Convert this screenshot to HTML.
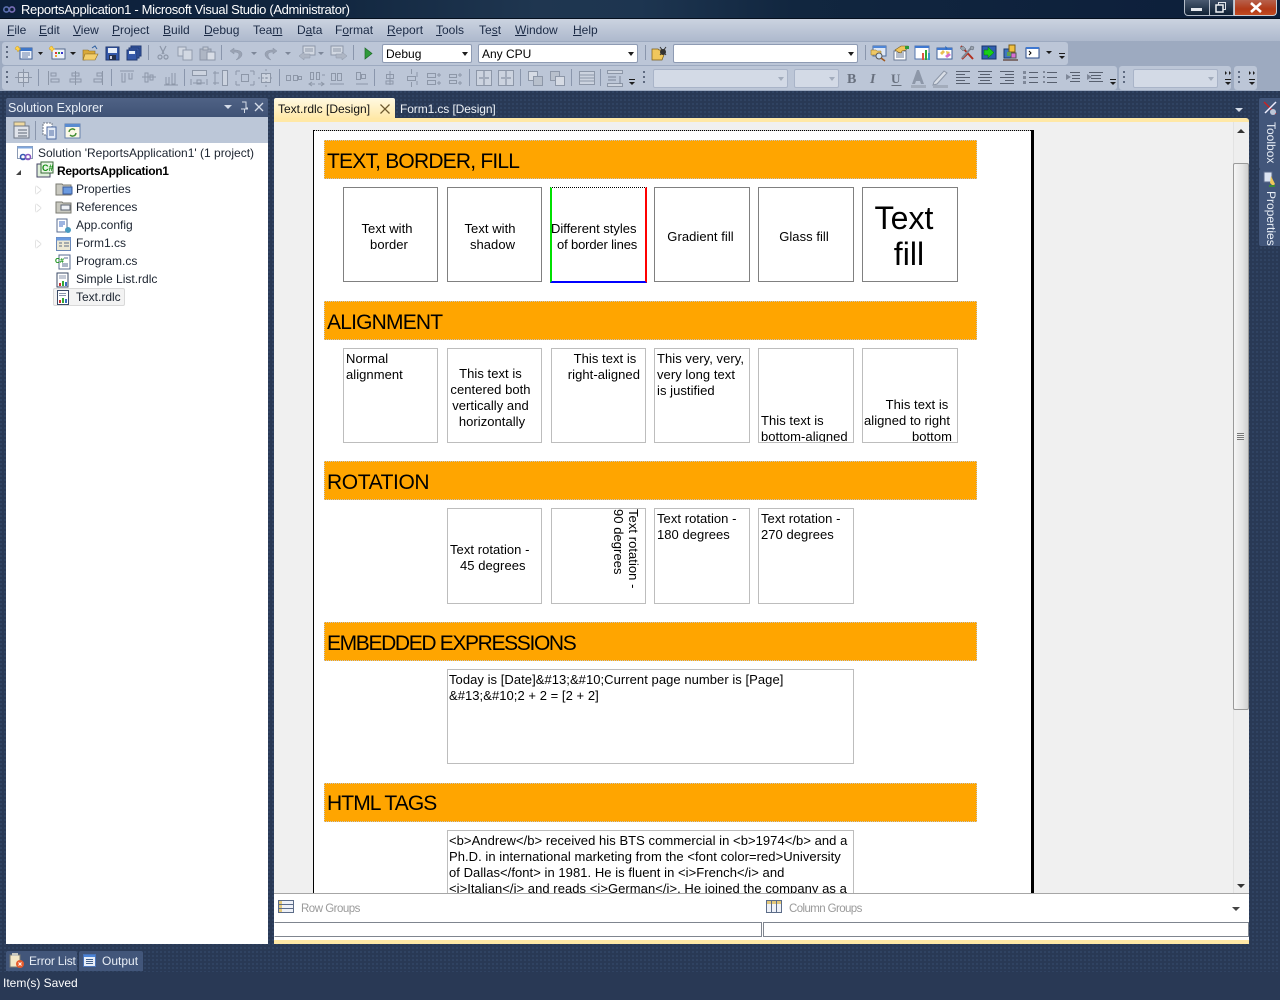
<!DOCTYPE html>
<html><head><meta charset="utf-8"><title>Visual Studio</title>
<style>
*{box-sizing:border-box}
html,body{margin:0;padding:0;width:1280px;height:1000px;overflow:hidden;background:#293955}
body{position:relative;font-family:"Liberation Sans",sans-serif;font-size:12px;color:#000}
div,span.a,svg.a{position:absolute}
.t{white-space:nowrap;line-height:16px}
.menu span{position:absolute;top:3px;line-height:16px;color:#1b2a45;white-space:nowrap;font-size:12px}
.menu u{text-decoration:underline}
.combo{background:#fff;border:1px solid #8e9bb3;border-radius:2px;height:19px;line-height:18px;padding-left:3px;font-size:12px}
.combo i,.ar{position:absolute;width:0;height:0;border-left:3px solid transparent;border-right:3px solid transparent;border-top:4px solid #1d1d1d}
.combo i{right:3px;top:7px}
.dis{background:#d3dae6;border:1px solid #a9b4c8}
.dis i{border-top-color:#a3adbd}
.tree{color:#1c2430;line-height:16px;white-space:nowrap;font-size:12px}
.tri{position:absolute;width:0;height:0;border-top:4px solid transparent;border-bottom:4px solid transparent;border-left:5px solid #fff;filter:drop-shadow(0 0 .6px #777)}
.r{font-size:13px;line-height:16px;color:#000;white-space:nowrap;letter-spacing:.05px}
.b{background:#fff;border:1px solid #bdbdbd;overflow:hidden}
.d{border:1px solid #808080;background:#fff}
.h{left:50px;width:653px;height:39px;background:#ffa500;outline:1px dotted #c4c4c4;outline-offset:-1px;font-size:21px;line-height:26px;white-space:nowrap;padding:9px 0 0 3px;letter-spacing:-.8px}
.bx{overflow:hidden}
.bx div{position:absolute}
</style></head><body>

<!-- backgrounds -->
<div style="left:0;top:0;width:1280px;height:18px;background:linear-gradient(90deg,#0c1f3b 0,#11263f 25%,#1f3650 42%,#1d3550 50%,#11263f 62%,#0c1e3a 100%)"></div>
<div style="left:0;top:18px;width:1280px;height:1px;background:#05101f"></div>
<div style="left:0;top:19px;width:1280px;height:22px;background:linear-gradient(#cbd3e0,#aeb9cd)"></div>
<div style="left:0;top:41px;width:1280px;height:50px;background:#9daac0"></div>
<div style="left:2px;top:42px;width:1066px;height:23px;background:#bcc6d7;border-radius:3px"></div>
<div style="left:2px;top:66px;width:1115px;height:24px;background:#bcc6d7;border-radius:3px"></div>
<div style="left:1119px;top:66px;width:112px;height:24px;background:#bcc6d7;border-radius:3px"></div>
<div style="left:1234px;top:66px;width:23px;height:24px;background:#bcc6d7;border-radius:3px"></div>
<div style="left:0;top:91px;width:1280px;height:881px;background-color:#293955;background-image:radial-gradient(circle at 1px 1px,#334667 0.8px,transparent 1px);background-size:4px 4px"></div>

<!-- title -->
<svg class="a" style="left:1px;top:5px" width="16" height="9"><g fill="none" stroke="#7b6fb8" stroke-width="1.6"><circle cx="11" cy="4.5" r="2.6"/><circle cx="5.4" cy="4.5" r="2.6" stroke="#5a6fb0"/></g></svg>
<div class="t" style="left:21px;top:2px;color:#fff;font-size:13px;letter-spacing:-.33px">ReportsApplication1 - Microsoft Visual Studio (Administrator)</div>
<div style="left:1184px;top:0;width:26px;height:16px;background:linear-gradient(#4a5a70,#0f2034);border:1px solid #b4bcc8;border-top:0;border-radius:0 0 0 4px"></div>
<div style="left:1209px;top:0;width:25px;height:16px;background:linear-gradient(#3a4a62,#0f2034);border:1px solid #b4bcc8;border-top:0"></div>
<div style="left:1234px;top:0;width:43px;height:16px;background:linear-gradient(#b7614c 0,#b23a18 60%,#c24a20);border:1px solid #c7ccd4;border-top:0;border-radius:0 0 4px 0"></div>
<div style="left:1191px;top:8px;width:11px;height:3px;background:#e6e9ee"></div>
<svg class="a" style="left:1215px;top:2px" width="12" height="11"><rect x="3.5" y=".5" width="7" height="7" fill="none" stroke="#dfe3ea"/><rect x="1" y="3" width="7" height="7" fill="#1c2e46" stroke="#eef0f4" stroke-width="1.5"/></svg>
<svg class="a" style="left:1249px;top:2px" width="14" height="11"><path d="M2 1l10 9M12 1L2 10" stroke="#fff" stroke-width="2.6"/></svg>

<!-- menu -->
<div class="menu" style="left:0;top:19px;width:640px;height:22px">
<span style="left:7px"><u>F</u>ile</span><span style="left:39px"><u>E</u>dit</span><span style="left:73px"><u>V</u>iew</span><span style="left:112px"><u>P</u>roject</span><span style="left:163px"><u>B</u>uild</span><span style="left:204px"><u>D</u>ebug</span><span style="left:253px">Tea<u>m</u></span><span style="left:297px">D<u>a</u>ta</span><span style="left:335px">F<u>o</u>rmat</span><span style="left:387px"><u>R</u>eport</span><span style="left:436px"><u>T</u>ools</span><span style="left:479px">Te<u>s</u>t</span><span style="left:515px"><u>W</u>indow</span><span style="left:573px"><u>H</u>elp</span>
</div>

<!-- toolbar graphics -->
<svg class="a" style="left:0;top:40px" width="1280" height="52" viewBox="0 40 1280 52">
<!-- grips -->
<g fill="#5e6a80"><rect x="6" y="46" width="2" height="2"/><rect x="6" y="51" width="2" height="2"/><rect x="6" y="56" width="2" height="2"/><rect x="6" y="71" width="2" height="2"/><rect x="6" y="76" width="2" height="2"/><rect x="6" y="81" width="2" height="2"/><rect x="643" y="71" width="2" height="2"/><rect x="643" y="76" width="2" height="2"/><rect x="643" y="81" width="2" height="2"/><rect x="1123" y="71" width="2" height="2"/><rect x="1123" y="76" width="2" height="2"/><rect x="1123" y="81" width="2" height="2"/><rect x="1238" y="71" width="2" height="2"/><rect x="1238" y="76" width="2" height="2"/><rect x="1238" y="81" width="2" height="2"/></g>
<!-- separators -->
<g stroke="#8a96ac"><path d="M148.500 45v15M221.500 45v15M353.500 45v15M645.500 45v15M865.500 45v15M38.500 69v17M111.500 69v17M184.500 69v17M279.500 69v17M374.500 69v17M469.500 69v17M520.500 69v17M571.500 69v17M600.500 69v17"/></g>
<!-- TB1 color icons -->
<rect x="20" y="48" width="12" height="11" fill="#eef3fb" stroke="#3e5f95"/><rect x="20" y="48" width="12" height="3" fill="#3e76c8"/><path d="M16 47l2-1 1 2 2 1-2 1-1 2-1-2-2-1z" fill="#ffd24a" stroke="#c89a20" stroke-width=".5"/><path d="M22 53h8M22 55h8M22 57h6" stroke="#6a82a8"/>
<rect x="52" y="49" width="13" height="10" fill="#eef3fb" stroke="#556a8c"/><rect x="55" y="52" width="2" height="2" fill="#d33"/><rect x="58" y="52" width="2" height="2" fill="#3a3"/><rect x="61" y="52" width="2" height="2" fill="#33c"/><rect x="55" y="55" width="2" height="2" fill="#ea3"/><path d="M50 47l2-1 1 2 2 1-2 1-1 2-1-2-2-1z" fill="#ffd24a" stroke="#c89a20" stroke-width=".5"/>
<path d="M83 50h5l1 1h6v3H87l-2 6h-2z" fill="#d9a93a" stroke="#8e6c22" stroke-width=".6"/><path d="M85 54h13l-3 6H83z" fill="#f3cf6d" stroke="#8e6c22" stroke-width=".6"/><path d="M92 48l3-2 2 3" fill="none" stroke="#2e5fa0"/>
<rect x="106" y="47" width="13" height="13" fill="#3457a8" stroke="#203870"/><rect x="108" y="48" width="9" height="5" fill="#e8eef8"/><rect x="109" y="55" width="7" height="5" fill="#26304a"/><rect x="110" y="56" width="2" height="3" fill="#ccd"/>
<rect x="131" y="46" width="10" height="10" fill="#3457a8" stroke="#203870"/><rect x="129" y="48" width="10" height="10" fill="#3b5fb4" stroke="#203870"/><rect x="127" y="50" width="10" height="10" fill="#3457a8" stroke="#203870"/><rect x="129" y="51" width="6" height="3" fill="#e8eef8"/>
<!-- disabled tb1 -->
<g fill="none" stroke="#8d97a8" stroke-width="1.2"><path d="M160 46l4 8M166 46l-4 8"/><circle cx="160" cy="57" r="2"/><circle cx="166" cy="57" r="2"/></g>
<rect x="178" y="47" width="8" height="9" fill="#d2d8e2" stroke="#929cad"/><rect x="183" y="50" width="9" height="10" fill="#d2d8e2" stroke="#929cad"/>
<rect x="200" y="49" width="11" height="11" fill="#aeb6c4" stroke="#8d97a8"/><rect x="203" y="47" width="5" height="3" fill="#c3c9d4" stroke="#8d97a8"/><rect x="207" y="52" width="8" height="8" fill="#d8dde6" stroke="#8d97a8"/>
<path d="M234 48l-4 3 4 3v-2c3 0 5 1 5 3s-2 4-3 5c3-1 6-3 6-6s-4-4-8-4z" fill="#9aa3b3" stroke="#8a94a6" stroke-width=".5"/>
<path d="M273 48l4 3-4 3v-2c-3 0-5 1-5 3s2 4 3 5c-3-1-6-3-6-6s4-4 8-4z" fill="#9aa3b3" stroke="#8a94a6" stroke-width=".5"/>
<path d="M251 52h6l-3 3zM285 52h6l-3 3zM318 52h6l-3 3z" fill="#7d8799"/>
<rect x="303" y="46" width="12" height="9" fill="#d2d8e2" stroke="#8d97a8"/><path d="M305 49h8M305 51h8" stroke="#8d97a8"/><path d="M299 56l5-4v2h6v4h-6v2z" fill="#aeb6c4" stroke="#8d97a8" stroke-width=".5"/>
<rect x="331" y="46" width="12" height="9" fill="#d2d8e2" stroke="#8d97a8"/><path d="M333 49h8M333 51h8" stroke="#8d97a8"/><path d="M347 56l-5-4v2h-6v4h6v2z" fill="#aeb6c4" stroke="#8d97a8" stroke-width=".5"/>
<path d="M365 48l7 5.500-7 5.500z" fill="#2f9a3a" stroke="#1f6a28" stroke-width=".7"/>
<path d="M38 52h5l-2.500 3zM70 52h6l-3 3zM1046 51h6l-3 3z" fill="#1d1d1d"/>
<!-- find -->
<path d="M652 49h6l1 1h6v2l-3 8h-10z" fill="#f0c75c" stroke="#7a5c16" stroke-width=".7"/><circle cx="663" cy="52" r="3" fill="#333"/><path d="M660 47l6 8M666 47l-6 8" stroke="#333"/>
<!-- right icons -->
<rect x="873" y="46" width="13" height="10" fill="#dfe8f6" stroke="#4a6a9c"/><rect x="873" y="46" width="13" height="2" fill="#4f86d6"/><path d="M871 50h5l1 1h4v4h-10z" fill="#eec866" stroke="#8e6c22" stroke-width=".5"/><circle cx="879" cy="56" r="3" fill="#cfe1f4" stroke="#555"/><path d="M881 58l4 3" stroke="#a05a20" stroke-width="1.6"/>
<rect x="894" y="51" width="12" height="9" fill="#fff" stroke="#6a7a94"/><path d="M896 53h8M896 55h8M896 57h8" stroke="#6a7a94"/><path d="M895 50l6-4h7l-2 4-4 1-1 2-3-1z" fill="#efc35a" stroke="#7a5c16" stroke-width=".6"/><path d="M905 46h4v3h-4z" fill="#2b9a3a"/>
<rect x="915" y="46" width="14" height="13" fill="#fff" stroke="#5476ac"/><rect x="915" y="46" width="14" height="2" fill="#3f78d0"/><rect x="922" y="53" width="2" height="7" fill="#d54"/><rect x="925" y="50" width="2" height="10" fill="#3a3"/><rect x="928" y="53" width="2" height="7" fill="#39c"/>
<rect x="937" y="48" width="15" height="11" fill="#fff" stroke="#41639b"/><rect x="937" y="48" width="15" height="2" fill="#3f78d0"/><path d="M940 53l3-3 2 2-3 3zM946 51l4 1-3 4z" fill="#e9c050"/><path d="M945 56l4-3 2 2-4 3z" fill="#d66fcf"/><path d="M945 46l3 2-2 2z" fill="#2d6bc0"/>
<path d="M961 46l12 13M962 59l6-6" stroke="#b23020" stroke-width="2"/><path d="M972 47l-10 11" stroke="#7f8894" stroke-width="2"/><path d="M960 48l3-2 3 3-3 2zM971 46l3 1-1 3-3-1z" fill="#9aa3ae" stroke="#596270" stroke-width=".5"/>
<rect x="982" y="46" width="14" height="13" fill="#2e5fb0" stroke="#19346c"/><path d="M984 50h4v-3l6 5.500-6 5.500v-3h-4z" fill="#17d017" stroke="#0a6a0a" stroke-width=".5"/>
<rect x="1004" y="49" width="8" height="9" fill="#3f76c0" stroke="#1d3d70"/><rect x="1009" y="45" width="6" height="7" fill="#f0c040" stroke="#7a5c16"/><rect x="1011" y="53" width="5" height="5" fill="#d86fd4" stroke="#555"/><rect x="1007" y="52" width="4" height="4" fill="#5ca052"/><rect x="1003" y="59" width="15" height="2" fill="#7e6e6e"/>
<rect x="1026" y="48" width="13" height="10" fill="#fff" stroke="#274a88"/><rect x="1026" y="47" width="13" height="2" fill="#3f78d0"/><path d="M1029 51l2 2-2 2" fill="none" stroke="#000"/>
<!-- overflow -->
<g fill="#1d1d1d"><rect x="1059" y="53" width="6" height="1"/><path d="M1059 56h6l-3 3z"/><rect x="629" y="79" width="6" height="1"/><path d="M629 82h6l-3 3z"/><rect x="1110" y="79" width="6" height="1"/><path d="M1110 82h6l-3 3z"/><rect x="1225" y="79" width="6" height="1"/><path d="M1225 82h6l-3 3z"/><rect x="1249" y="79" width="6" height="1"/><path d="M1249 82h6l-3 3z"/><path d="M1225 71l2 2-2 2zM1229 71l2 2-2 2zM1249 71l2 2-2 2zM1253 71l2 2-2 2z"/></g>
<!-- TB2 disabled layout icons -->
<g fill="none" stroke="#8d97a8">
<rect x="18.500" y="72.500" width="10" height="10" fill="#ccd3df"/><path d="M23.500 69v18M15 77.500h17"/>
<path d="M48.500 71v14M51 73h5v3h-5zM51 79h8v3h-8z"/>
<path d="M75.500 71v14M72 73h7v3h-7zM70 79h11v3H70z"/>
<path d="M102.500 71v14M97 73h5v3h-5zM94 79h8v3h-8z"/>
<path d="M120 71h14M122 73v9h3v-9M129 73v6h3v-6"/>
<path d="M142 77h14M145 73h3v9h-3zM150 75h3v5h-3z"/>
<path d="M164 85h14M166 77v7h3v-7M172 73v11h3V73"/>
<rect x="192.500" y="70.500" width="14" height="5" fill="#ccd3df"/><path d="M191 79v6M207 79v6M193 83h12"/><rect x="197" y="80" width="4" height="4"/>
<rect x="222.500" y="70.500" width="5" height="15" fill="#ccd3df"/><path d="M215 71v14M213 73h6M213 83h6"/>
<rect x="241.500" y="74.500" width="7" height="7"/><path d="M236 71h4M236 71v4M254 71h-4M254 71v4M236 85h4M236 85v-4M254 85h-4M254 85v-4"/>
<rect x="261.500" y="73.500" width="9" height="9" fill="#ccd3df"/><path d="M266 69v18M258 78h16" stroke-dasharray="2 2"/>
<rect x="286.500" y="75.500" width="4" height="5"/><rect x="293.500" y="75.500" width="4" height="5"/><rect x="298.500" y="76.500" width="3" height="3"/>
<rect x="310.500" y="72.500" width="3" height="7"/><rect x="316.500" y="72.500" width="3" height="7"/><path d="M322 75h3M309 84h6M318 84h6M312 82l-3 2 3 2M321 82l3 2-3 2"/>
<rect x="331.500" y="73.500" width="4" height="7"/><rect x="337.500" y="73.500" width="4" height="7"/><path d="M330 84h14"/>
<rect x="356.500" y="72.500" width="4" height="7"/><rect x="361.500" y="74.500" width="4" height="4"/><path d="M356 84h12"/>
<rect x="386.500" y="74.500" width="7" height="4"/><path d="M390 71v14M386 81h7v3h-7z"/>
<rect x="407.500" y="76.500" width="8" height="4"/><path d="M411.500 69v5M411.500 82v5M417 72v5M417 81v4"/>
<rect x="427.500" y="73.500" width="8" height="4"/><rect x="427.500" y="80.500" width="8" height="4"/><path d="M439 73v4M437 75h4M439 81v4M437 83h4"/>
<rect x="449.500" y="74.500" width="7" height="3"/><rect x="449.500" y="80.500" width="7" height="3"/><path d="M460 73v4M458 75h4M460 81v4M458 83h4"/>
<rect x="476.500" y="70.500" width="15" height="15" fill="#ccd3df"/><path d="M484 71v14M479 78h10" stroke="#a2abbb" stroke-width="2"/>
<rect x="498.500" y="70.500" width="15" height="15" fill="#ccd3df"/><path d="M506 71v14M501 78h10" stroke="#a2abbb" stroke-width="2"/>
<rect x="528.500" y="71.500" width="9" height="9" fill="#d6dbe4"/><rect x="533.500" y="76.500" width="9" height="9" fill="#b8c0cc"/>
<rect x="550.500" y="71.500" width="9" height="9" fill="#b8c0cc"/><rect x="555.500" y="76.500" width="9" height="9" fill="#d6dbe4"/>
<rect x="579.500" y="71.500" width="15" height="13" fill="#ccd3df"/><path d="M580 75h15M580 78h15M580 81h15"/>
<rect x="607.500" y="70.500" width="15" height="3" fill="#ccd3df"/><rect x="607.500" y="83.500" width="15" height="3" fill="#ccd3df"/><path d="M608 77h8M608 80h8M620 76v8" stroke="#7d8799"/>
</g>
<!-- format -->
<text x="847" y="83" font-family="Liberation Serif" font-weight="bold" font-size="14" fill="#68707e">B</text>
<text x="870" y="83" font-family="Liberation Serif" font-style="italic" font-weight="bold" font-size="14" fill="#68707e">I</text>
<text x="891" y="83" font-family="Liberation Serif" font-weight="bold" font-size="13" fill="#68707e">U</text>
<path d="M891.500 85.500h10" stroke="#68707e"/>
<path d="M912 84l5-14h2l5 14h-3l-1-3h-4l-1 3z" fill="#8d97a8"/><rect x="911" y="85" width="15" height="3" fill="#a3acbb"/>
<path d="M934 82l10-11 3 2-10 11-4 1z" fill="#d9dee6" stroke="#8d97a8"/><rect x="933" y="85" width="15" height="3" fill="#a3acbb"/>
<g stroke="#575f6e"><path d="M956 71.500h14M956 74.500h9M956 77.500h14M956 80.500h9M956 83.500h14"/><path d="M978 71.500h14M980 74.500h10M978 77.500h14M980 80.500h10M978 83.500h14"/><path d="M1000 71.500h14M1005 74.500h9M1000 77.500h14M1005 80.500h9M1000 83.500h14"/><path d="M1029 72.500h9M1029 77.500h9M1029 82.500h9M1047 72.500h10M1047 77.500h10M1047 82.500h10M1070 72.500h10M1072 75.500h8M1072 78.500h8M1070 81.500h10M1089 72.500h14M1091 75.500h10M1091 78.500h10M1089 81.500h14"/></g>
<g fill="#7f8899"><rect x="1023" y="71" width="3" height="3"/><rect x="1023" y="76" width="3" height="3"/><rect x="1023" y="81" width="3" height="3"/><rect x="1043" y="71" width="2" height="2"/><rect x="1043" y="76" width="2" height="2"/><rect x="1043" y="81" width="2" height="2"/><path d="M1071 77l-5-3v6zM1092 77l-5-3v6z"/></g>
</svg>

<!-- combos -->
<div class="combo" style="left:382px;top:44px;width:90px">Debug<i></i></div>
<div class="combo" style="left:478px;top:44px;width:160px">Any CPU<i></i></div>
<div class="combo" style="left:673px;top:44px;width:185px"><i></i></div>
<div class="combo dis" style="left:653px;top:69px;width:135px"><i></i></div>
<div class="combo dis" style="left:794px;top:69px;width:45px"><i></i></div>
<div class="combo dis" style="left:1133px;top:69px;width:85px"><i></i></div>

<!-- Solution explorer -->
<div style="left:6px;top:98px;width:262px;height:19px;background:linear-gradient(#4f6285,#3f5275);border-radius:2px 2px 0 0"></div>
<div class="t" style="left:8px;top:100px;color:#e8eef6;font-size:12.500px">Solution Explorer</div>
<svg class="a" style="left:222px;top:100px" width="44" height="15"><path d="M2 5h8l-4 4z" fill="#d5dce8"/><path d="M20 2h4v6h1.500v1H22.500v4M19 9h6" stroke="#d5dce8" fill="none"/><path d="M33 3l8 8M41 3l-8 8" stroke="#d5dce8" stroke-width="1.3"/></svg>
<div style="left:6px;top:117px;width:262px;height:26px;background:#bcc7d8"></div>
<div style="left:6px;top:143px;width:262px;height:801px;background:#fff"></div>
<svg class="a" style="left:10px;top:120px" width="76" height="20"><rect x="4" y="2" width="11" height="6" fill="#efd9a0" stroke="#8a8a80"/><rect x="4" y="6" width="15" height="12" fill="#dfe3ea" stroke="#6b7484"/><path d="M8 10h9M8 13h9M8 16h9" stroke="#5b6474"/><path d="M25.500 1v19" stroke="#8a96ac"/><rect x="33" y="3" width="9" height="12" fill="#fff" stroke="#6b7484" stroke-dasharray="2 1"/><rect x="37" y="7" width="9" height="12" fill="#e3ebf7" stroke="#4d6aa0"/><path d="M39 11h5M39 13h5M39 15h5" stroke="#4d6aa0"/><rect x="55" y="4" width="15" height="14" fill="#fbf8e6" stroke="#6680ac"/><rect x="55" y="4" width="15" height="3" fill="#5a8bd0"/><path d="M59 12a3.500 3.500 0 0 1 6-2M66 13a3.500 3.500 0 0 1-6 2" stroke="#3c8a2c" fill="none" stroke-width="1.4"/></svg>
<svg class="a" style="left:16px;top:145px" width="60" height="160">
<rect x="1.500" y="1.500" width="15" height="12" fill="#fff" stroke="#8a9ab4"/><rect x="1.500" y="1.500" width="15" height="2" fill="#7fa7de"/><circle cx="7" cy="12" r="2.500" fill="none" stroke="#3557b0" stroke-width="1.600"/><circle cx="12" cy="12" r="2.500" fill="none" stroke="#8656c0" stroke-width="1.600"/>
<path d="M0 30l5-5v5z" fill="#444"/>
<rect x="21" y="19" width="13" height="13" fill="#dff0da" stroke="#446"/><rect x="25" y="17" width="12" height="11" fill="#eaf5e6" stroke="#3a6a3a"/><text x="26" y="26" font-family="Liberation Sans" font-size="9" font-weight="bold" fill="#129012">C#</text>
<path d="M40 39h6l1 1h8v10H40z" fill="#c9c9c0" stroke="#7a7a72"/><rect x="47" y="42" width="9" height="7" fill="#6a9ae0" stroke="#3a5a9a"/>
<path d="M40 57h6l1 1h8v10H40z" fill="#c9c9c0" stroke="#7a7a72"/><rect x="45" y="60" width="9" height="5" fill="#eef1f6" stroke="#5a6272"/>
<rect x="41" y="74" width="10" height="13" fill="#fff" stroke="#5a6c90"/><path d="M43 77h6M43 79h6M43 81h4" stroke="#3e68c0"/><circle cx="52" cy="85" r="3" fill="#4a9bc0"/>
<rect x="40.500" y="92.500" width="14" height="13" fill="#ece8d4" stroke="#6a88b8"/><rect x="40.500" y="92.500" width="14" height="3" fill="#6a9ae0"/><path d="M43 98h3M43 101h3M48 98h5M48 101h5" stroke="#5a6a84"/>
<rect x="43" y="110" width="11" height="14" fill="#fff" stroke="#5a6c90"/><text x="39" y="118" font-family="Liberation Sans" font-size="7" font-weight="bold" fill="#129012">C#</text><path d="M48 113h4M46 119h6M46 121h6" stroke="#5a6c90"/>
<rect x="41" y="128" width="11" height="14" fill="#fff" stroke="#3a4a66"/><path d="M43 131h7M43 133h7" stroke="#8a96ac"/><rect x="43" y="138" width="2" height="3" fill="#c33"/><rect x="46" y="136" width="2" height="5" fill="#3a3"/><rect x="49" y="137" width="2" height="4" fill="#3a6ac0"/>
</svg>
<div class="tri" style="left:36px;top:186px"></div><div class="tri" style="left:36px;top:204px"></div><div class="tri" style="left:36px;top:240px"></div>
<div class="tree" style="left:38px;top:145px">Solution 'ReportsApplication1' (1 project)</div>
<div class="tree" style="left:57px;top:163px;font-weight:bold;color:#000;letter-spacing:-.3px">ReportsApplication1</div>
<div class="tree" style="left:76px;top:181px">Properties</div>
<div class="tree" style="left:76px;top:199px">References</div>
<div class="tree" style="left:76px;top:217px">App.config</div>
<div class="tree" style="left:76px;top:235px">Form1.cs</div>
<div class="tree" style="left:76px;top:253px">Program.cs</div>
<div class="tree" style="left:76px;top:271px">Simple List.rdlc</div>
<div style="left:53px;top:288px;width:72px;height:18px;border:1px solid #d9d9d9;border-radius:2px;background:#f3f3f3"></div>
<svg class="a" style="left:57px;top:290px" width="13" height="15"><rect x=".5" y=".5" width="11" height="14" fill="#fff" stroke="#3a4a66"/><path d="M2 3.500h7M2 5.500h7" stroke="#8a96ac"/><rect x="2" y="10" width="2" height="3" fill="#c33"/><rect x="5" y="8" width="2" height="5" fill="#3a3"/><rect x="8" y="9" width="2" height="4" fill="#3a6ac0"/></svg>
<div class="tree" style="left:76px;top:289px">Text.rdlc</div>

<!-- tabs -->
<div style="left:274px;top:98px;width:121px;height:21px;background:linear-gradient(#fff9e2,#ffe8a6);border-radius:2px 2px 0 0"></div>
<div class="t" style="left:278px;top:101px;color:#111">Text.rdlc [Design]</div>
<svg class="a" style="left:379px;top:103px" width="12" height="12"><path d="M1.500 1.500l9 9M10.500 1.500l-9 9" stroke="#6d5a30" stroke-width="1.300"/></svg>
<div class="t" style="left:400px;top:101px;color:#eef2f7;letter-spacing:-.1px">Form1.cs [Design]</div>
<div class="ar" style="left:1235px;top:108px;border-top-color:#d5dce8;border-left-width:4px;border-right-width:4px"></div>
<div style="left:274px;top:118px;width:975px;height:4px;background:#ffe8a6;border-radius:0 3px 0 0"></div>

<!-- document -->
<div style="left:274px;top:122px;width:975px;height:771px;background:#f0f0f0;overflow:hidden" class="bx">
  <div style="left:39px;top:8px;width:721px;height:780px;background:#fff;border-left:1px solid #000;border-top:1px solid #000;border-right:3px solid #000"></div>
  <div style="left:40px;top:8px;width:717px;height:1px;background:repeating-linear-gradient(90deg,#000 0 1px,#ccc 1px 2px)"></div>

  <div class="h" style="top:18px">TEXT, BORDER, FILL</div>
  <div class="d" style="left:69px;top:65px;width:95px;height:95px"></div>
  <div class="r" style="left:69px;top:99px;width:88px;text-align:center">Text with<br><span style="padding-left:4px">border</span></div>
  <div class="d" style="left:173px;top:65px;width:95px;height:95px"></div>
  <div class="r" style="left:173px;top:99px;width:86px;text-align:center">Text with<br><span style="padding-left:5px">shadow</span></div>
  <div style="left:276px;top:65px;width:97px;height:96px;background:#fff;border-top:1px dotted #000;border-left:2px solid #00e000;border-right:2px solid #f00;border-bottom:2px solid #00f"></div>
  <div class="r" style="left:278px;top:99px;width:93px;text-align:left;overflow:hidden;letter-spacing:-.02px"><span style="margin-left:-1px">Different styles</span><br><span style="padding-left:5px;letter-spacing:-.15px">of border lines</span></div>
  <div class="d" style="left:380px;top:65px;width:96px;height:95px"></div>
  <div class="r" style="left:380px;top:107px;width:93px;text-align:center">Gradient fill</div>
  <div class="d" style="left:484px;top:65px;width:96px;height:95px"></div>
  <div class="r" style="left:484px;top:107px;width:92px;text-align:center">Glass fill</div>
  <div class="d" style="left:588px;top:65px;width:96px;height:95px"></div>
  <div class="r" style="left:588px;top:78px;width:84px;text-align:center;font-size:32px;line-height:36px">Text<br><span style="padding-left:10px">fill</span></div>

  <div class="h" style="top:179px">ALIGNMENT</div>
  <div class="b" style="left:69px;top:226px;width:95px;height:95px"></div>
  <div class="r" style="left:72px;top:229px">Normal<br>alignment</div>
  <div class="b" style="left:173px;top:226px;width:95px;height:95px"></div>
  <div class="r" style="left:173px;top:244px;width:87px;text-align:center">This text is<br>centered both<br>vertically and<br><span style="padding-left:3px">horizontally</span></div>
  <div class="b" style="left:277px;top:226px;width:95px;height:95px"></div>
  <div class="r" style="left:277px;top:229px;width:89px;text-align:right">This text is&nbsp;<br>right-aligned</div>
  <div class="b" style="left:380px;top:226px;width:96px;height:95px"></div>
  <div class="r" style="left:383px;top:229px">This very, very,<br>very long text<br>is justified</div>
  <div class="b" style="left:484px;top:226px;width:96px;height:95px"></div>
  <div class="r" style="left:487px;top:291px;height:29px;overflow:hidden">This text is<br>bottom-aligned</div>
  <div class="b" style="left:588px;top:226px;width:96px;height:95px"></div>
  <div class="r" style="left:590px;top:275px;width:88px;height:45px;overflow:hidden;text-align:right">This text is&nbsp;<br>aligned to right&nbsp;<br>bottom</div>

  <div class="h" style="top:339px;letter-spacing:-.4px">ROTATION</div>
  <div class="b" style="left:173px;top:386px;width:95px;height:96px"></div>
  <div class="r" style="left:176px;top:420px">Text rotation -<br><span style="padding-left:10px">45 degrees</span></div>
  <div class="b" style="left:277px;top:386px;width:95px;height:96px"></div>
  <div class="r" style="left:337px;top:387px;writing-mode:vertical-rl;line-height:15px;height:90px">Text rotation -<br>90 degrees</div>
  <div class="b" style="left:380px;top:386px;width:96px;height:96px"></div>
  <div class="r" style="left:383px;top:389px">Text rotation -<br>180 degrees</div>
  <div class="b" style="left:484px;top:386px;width:96px;height:96px"></div>
  <div class="r" style="left:487px;top:389px">Text rotation -<br>270 degrees</div>

  <div class="h" style="top:500px;letter-spacing:-1.35px">EMBEDDED EXPRESSIONS</div>
  <div class="b" style="left:173px;top:547px;width:407px;height:95px"></div>
  <div class="r" style="left:175px;top:550px">Today is [Date]&amp;#13;&amp;#10;Current page number is [Page]<br>&amp;#13;&amp;#10;2 + 2 = [2 + 2]</div>

  <div class="h" style="top:661px;padding-top:8px;letter-spacing:-.9px">HTML TAGS</div>
  <div class="b" style="left:173px;top:708px;width:407px;height:95px"></div>
  <div class="r" style="left:175px;top:711px">&lt;b&gt;Andrew&lt;/b&gt; received his BTS commercial in &lt;b&gt;1974&lt;/b&gt; and a<br>Ph.D. in international marketing from the &lt;font color=red&gt;University<br>of Dallas&lt;/font&gt; in 1981. He is fluent in &lt;i&gt;French&lt;/i&gt; and<br>&lt;i&gt;Italian&lt;/i&gt; and reads &lt;i&gt;German&lt;/i&gt;. He joined the company as a</div>

  <!-- scrollbar -->
  <div style="left:959px;top:0;width:16px;height:771px;background:#eee;border-left:1px solid #e2e2e2"></div>
  <div style="left:959px;top:41px;width:16px;height:547px;background:linear-gradient(90deg,#f6f6f6,#e4e4e4 60%,#cfcfcf);border:1px solid #9a9a9a;border-radius:2px"></div>
  <div style="left:963px;top:7px;width:0;height:0;border-left:4px solid transparent;border-right:4px solid transparent;border-bottom:4px solid #333"></div>
  <div style="left:963px;top:762px;width:0;height:0;border-left:4px solid transparent;border-right:4px solid transparent;border-top:4px solid #333"></div>
  <div style="left:963px;top:311px;width:7px;height:7px;background:repeating-linear-gradient(#777 0 1px,#eee 1px 2px)"></div>
</div>

<!-- bottom groups -->
<div style="left:274px;top:893px;width:975px;height:51px;background:#fff;border-top:1px solid #a6a6a6"></div>
<svg class="a" style="left:278px;top:900px" width="16" height="14"><rect x=".5" y=".5" width="15" height="12" fill="#eef1f8" stroke="#5c6c88"/><rect x="1" y="1" width="3" height="11" fill="#e3c87a"/><path d="M1 4.500h14M1 8.500h14" stroke="#5c6c88"/></svg>
<div class="t" style="left:301px;top:901px;color:#9a9a9a;font-size:11.500px;letter-spacing:-.5px">Row Groups</div>
<svg class="a" style="left:766px;top:900px" width="16" height="14"><rect x=".5" y=".5" width="15" height="12" fill="#eef1f8" stroke="#5c6c88"/><rect x="1" y="1" width="14" height="3" fill="#e3c87a"/><path d="M5.500 1v11M10.500 1v11" stroke="#5c6c88"/></svg>
<div class="t" style="left:789px;top:901px;color:#9a9a9a;font-size:11.500px;letter-spacing:-.6px">Column Groups</div>
<div class="ar" style="left:1232px;top:907px;border-left-width:4px;border-right-width:4px;border-top-color:#444"></div>
<div style="left:274px;top:922px;width:488px;height:15px;border:1px solid #7f858f;border-left-color:#fff;background:#fff"></div>
<div style="left:763px;top:922px;width:486px;height:15px;border:1px solid #7f858f;background:#fff"></div>
<div style="left:274px;top:940px;width:975px;height:4px;background:#ffe8a6"></div>

<!-- side tabs -->
<div style="left:1259px;top:98px;width:21px;height:71px;background:#42567a;border-radius:2px 0 0 2px"></div>
<div style="left:1259px;top:169px;width:21px;height:77px;background:#42567a;border-radius:2px 0 0 2px"></div>
<svg class="a" style="left:1262px;top:100px" width="16" height="16"><path d="M2 2l12 12" stroke="#c22" stroke-width="1.500"/><path d="M14 2L3 13" stroke="#eef" stroke-width="1.500"/><circle cx="11" cy="12" r="3" fill="#bcc6d7"/></svg>
<svg class="a" style="left:1263px;top:171px" width="15" height="16"><rect x="1" y="1" width="8" height="10" fill="#dbe4f2" stroke="#5a6a8a"/><path d="M8 5l4 8-2 2-3-3z" fill="#eec75a"/><rect x="6" y="14" width="6" height="2" fill="#3a8a3a"/></svg>
<div class="t" style="left:1263px;top:122px;writing-mode:vertical-rl;color:#e8eef6">Toolbox</div>
<div class="t" style="left:1263px;top:191px;writing-mode:vertical-rl;color:#e8eef6">Properties</div>

<!-- bottom tabs & status -->
<div style="left:6px;top:951px;width:71px;height:20px;background:#42567a;border-radius:2px 2px 0 0"></div>
<div style="left:79px;top:951px;width:64px;height:20px;background:#42567a;border-radius:2px 2px 0 0"></div>
<svg class="a" style="left:8px;top:952px" width="17" height="17"><rect x="2" y="3" width="10" height="12" fill="#f3e7c6" stroke="#7a7a72"/><rect x="4" y="1" width="6" height="3" fill="#c8c8c0"/><circle cx="12" cy="12" r="4" fill="#e85c2c"/><path d="M10.500 10.500l3 3M13.500 10.500l-3 3" stroke="#fff"/></svg>
<svg class="a" style="left:83px;top:954px" width="13" height="13"><rect x=".5" y=".5" width="12" height="12" fill="#e8eef8" stroke="#4a74b8"/><rect x="1" y="1" width="11" height="2" fill="#4a84d8"/><path d="M3 5.500h7M3 7.500h7M3 9.500h7" stroke="#40608c"/></svg>
<div class="t" style="left:29px;top:953px;color:#e8eef6;letter-spacing:-.2px">Error List</div>
<div class="t" style="left:102px;top:953px;color:#e8eef6">Output</div>
<div class="t" style="left:3px;top:975px;color:#fff">Item(s) Saved</div>
</body></html>
